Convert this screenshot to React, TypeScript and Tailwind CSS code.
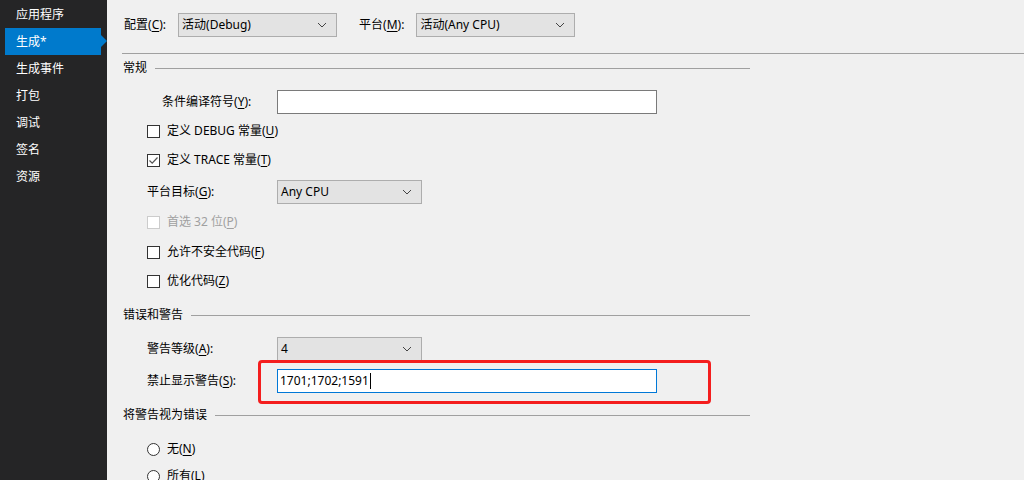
import React from "react";

const FONT = { fontFamily: '"Noto Sans", "Noto Sans CJK SC", sans-serif' };

function U({ k }: { k: string }) {
  return <span className="underline underline-offset-2">{k}</span>;
}

function Label({ text, k, suffix = ":" }: { text: string; k: string; suffix?: string }) {
  return (
    <span className="whitespace-nowrap">
      {text}(<U k={k} />){suffix}
    </span>
  );
}

function Chevron() {
  return (
    <svg width="10" height="6" viewBox="0 0 10 6" className="shrink-0">
      <path d="M1 1 L5 5 L9 1" fill="none" stroke="#444" strokeWidth="1" />
    </svg>
  );
}

function Select({ value, w }: { value: string; w: string }) {
  return (
    <div className={`${w} h-[24px] bg-[#e3e3e3] border border-[#adadad] flex items-center justify-between pl-[3px] pr-[9px] text-[12px] text-black`}>
      <span>{value}</span>
      <Chevron />
    </div>
  );
}

function Check({ checked = false, disabled = false }: { checked?: boolean; disabled?: boolean }) {
  return (
    <div
      className={`w-[13px] h-[13px] border ${disabled ? "border-[#cccccc]" : "border-[#333333]"} bg-white flex items-center justify-center shrink-0`}
    >
      {checked && (
        <svg width="11" height="11" viewBox="0 0 11 11">
          <path d="M1.5 5.5 L4.2 8.2 L9.5 2.5" fill="none" stroke="#555" strokeWidth="1.2" />
        </svg>
      )}
    </div>
  );
}

function Radio() {
  return <div className="w-[13px] h-[13px] rounded-full border border-[#333333] bg-white shrink-0" />;
}

function Header({ text }: { text: string }) {
  return (
    <div className="h-[24px] flex items-center pl-[1px]">
      <span className="whitespace-nowrap">{text}</span>
      <div className="flex-1 h-px bg-[#a0a0a0] ml-[8px]" />
    </div>
  );
}

export default function App() {
  const side = ["应用程序", "生成*", "生成事件", "打包", "调试", "签名", "资源"];
  return (
    <div className="w-[1024px] h-[480px] flex overflow-hidden text-[12px] text-black" style={FONT}>
      <div className="w-[107px] h-full bg-[#252526] pt-[1px] shrink-0">
        {side.map((s, i) =>
          i === 1 ? (
            <div key={s} className="relative h-[27px] ml-[5px] w-[96px] bg-[#007acc] flex items-center pl-[11px] text-white">
              {s}
              <div className="absolute left-[96px] top-[7px] w-0 h-0 border-y-[6px] border-y-transparent border-l-[6px] border-l-[#007acc]" />
            </div>
          ) : (
            <div key={s} className="h-[27px] flex items-center pl-[16px] text-white">
              {s}
            </div>
          )
        )}
      </div>
      <div className="flex-1 h-full bg-[#f0f0f0]">
        <div className="mt-[13px] pl-[17px] flex items-center h-[24px]">
          <Label text="配置" k="C" />
          <div className="ml-[12px]">
            <Select value="活动(Debug)" w="w-[159px]" />
          </div>
          <div className="ml-[22px]">
            <Label text="平台" k="M" />
          </div>
          <div className="ml-[12px]">
            <Select value="活动(Any CPU)" w="w-[159px]" />
          </div>
        </div>
        <div className="mt-[16px] ml-[15px] h-px bg-[#a0a0a0]" />
        <div className="ml-[15px] w-[628px] flex flex-col">
          <div className="mt-[2px]">
            <Header text="常规" />
          </div>
          <div className="mt-[10px] h-[24px] flex items-center">
            <div className="w-[155px] pl-[40px]">
              <Label text="条件编译符号" k="Y" />
            </div>
            <div className="w-[380px] h-[24px] bg-white border border-[#7a7a7a]" />
          </div>
          <div className="mt-[5px] h-[24px] flex items-center pl-[25px] gap-[7px]">
            <Check />
            <span>
              定义 DEBUG 常量(<U k="U" />)
            </span>
          </div>
          <div className="mt-[5px] h-[24px] flex items-center pl-[25px] gap-[7px]">
            <Check checked />
            <span>
              定义 TRACE 常量(<U k="T" />)
            </span>
          </div>
          <div className="mt-[8px] h-[24px] flex items-center">
            <div className="w-[155px] pl-[25px]">
              <Label text="平台目标" k="G" />
            </div>
            <Select value="Any CPU" w="w-[145px]" />
          </div>
          <div className="mt-[6px] h-[24px] flex items-center pl-[25px] gap-[7px] text-[#a0a0a0]">
            <Check disabled />
            <span>
              首选 32 位(<U k="P" />)
            </span>
          </div>
          <div className="mt-[6px] h-[24px] flex items-center pl-[25px] gap-[7px]">
            <Check />
            <span>
              允许不安全代码(<U k="F" />)
            </span>
          </div>
          <div className="mt-[5px] h-[24px] flex items-center pl-[25px] gap-[7px]">
            <Check />
            <span>
              优化代码(<U k="Z" />)
            </span>
          </div>
          <div className="mt-[10px]">
            <Header text="错误和警告" />
          </div>
          <div className="mt-[10px] h-[24px] flex items-center">
            <div className="w-[155px] pl-[25px]">
              <Label text="警告等级" k="A" />
            </div>
            <Select value="4" w="w-[145px]" />
          </div>
          <div className="relative mt-[8px] h-[24px] flex items-center">
            <div className="w-[155px] pl-[25px]">
              <Label text="禁止显示警告" k="S" />
            </div>
            <div className="w-[380px] h-[24px] bg-white border border-[#0078d7] flex items-center pl-[2px]">
              <span>1701;1702;1591</span>
              <span className="w-px h-[16px] bg-black ml-[1px]" />
            </div>
            <div className="absolute left-[136px] top-[-9px] w-[453px] h-[44px] border-[3px] border-[#f41e1e] rounded-[4px] pointer-events-none" />
          </div>
          <div className="mt-[10px]">
            <Header text="将警告视为错误" />
          </div>
          <div className="mt-[10px] h-[24px] flex items-center pl-[25px] gap-[7px]">
            <Radio />
            <span>
              无(<U k="N" />)
            </span>
          </div>
          <div className="mt-[3px] h-[24px] flex items-center pl-[25px] gap-[7px]">
            <Radio />
            <span>
              所有(<U k="L" />)
            </span>
          </div>
        </div>
      </div>
    </div>
  );
}
